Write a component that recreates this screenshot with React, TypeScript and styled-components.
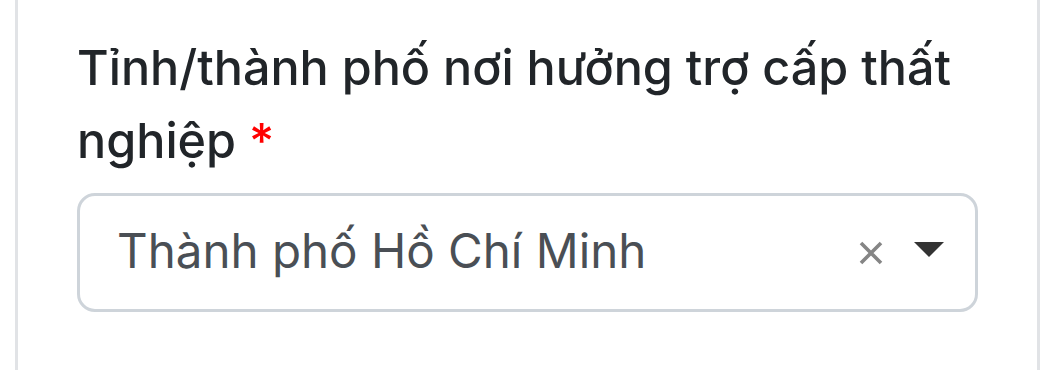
import styled, { createGlobalStyle } from "styled-components";

const GlobalStyle = createGlobalStyle`
  html, body {
    margin: 0;
    padding: 0;
    background: #fff;
  }
  body {
    font-family: Inter, "Noto Sans", "Liberation Sans", sans-serif;
  }
`;

export default function App() {
  return (
    <>
      <GlobalStyle />
      <Card>
        <Field>
          <Label>
            Tỉnh/thành phố nơi hưởng trợ cấp thất nghiệp <Required>*</Required>
          </Label>
          <Select>
            <Value>Thành phố Hồ Chí Minh</Value>
            <Clear aria-label="clear">
              <svg width="24" height="24" viewBox="0 0 24 24">
                <path
                  d="M2 2 L22 22 M22 2 L2 22"
                  stroke="#858585"
                  strokeWidth="3.6"
                  fill="none"
                />
              </svg>
            </Clear>
            <Caret>
              <svg width="30" height="15" viewBox="0 0 30 15">
                <polygon points="0,0 30,0 15,15" fill="#333" />
              </svg>
            </Caret>
          </Select>
        </Field>
      </Card>
    </>
  );
}

const Card = styled.div`
  margin-left: 15px;
  width: 1025px;
  height: 370px;
  box-sizing: border-box;
  border-left: 3px solid #e1e3e6;
  border-right: 3px solid #e1e3e6;
  padding: 31px 59px 0;
`;

const Field = styled.div`
  display: flex;
  flex-direction: column;
`;

const Label = styled.label`
  display: block;
  font-size: 48.5px;
  line-height: 73px;
  font-weight: 450;
  color: #212529;
  margin-bottom: 16px;
`;

const Required = styled.span`
  color: #f00;
`;

const Select = styled.div`
  display: flex;
  align-items: center;
  height: 119px;
  box-sizing: border-box;
  border: 3px solid #ced4da;
  border-radius: 18px;
  padding: 0 31px 0 37px;
`;

const Value = styled.span`
  flex: 1;
  font-size: 47.5px;
  line-height: 1;
  color: #4a4f55;
  padding-bottom: 4px;
`;

const Clear = styled.span`
  display: flex;
  width: 24px;
  height: 24px;
  margin-right: 31px;
`;

const Caret = styled.span`
  display: flex;
  margin-top: -6px;
`;
